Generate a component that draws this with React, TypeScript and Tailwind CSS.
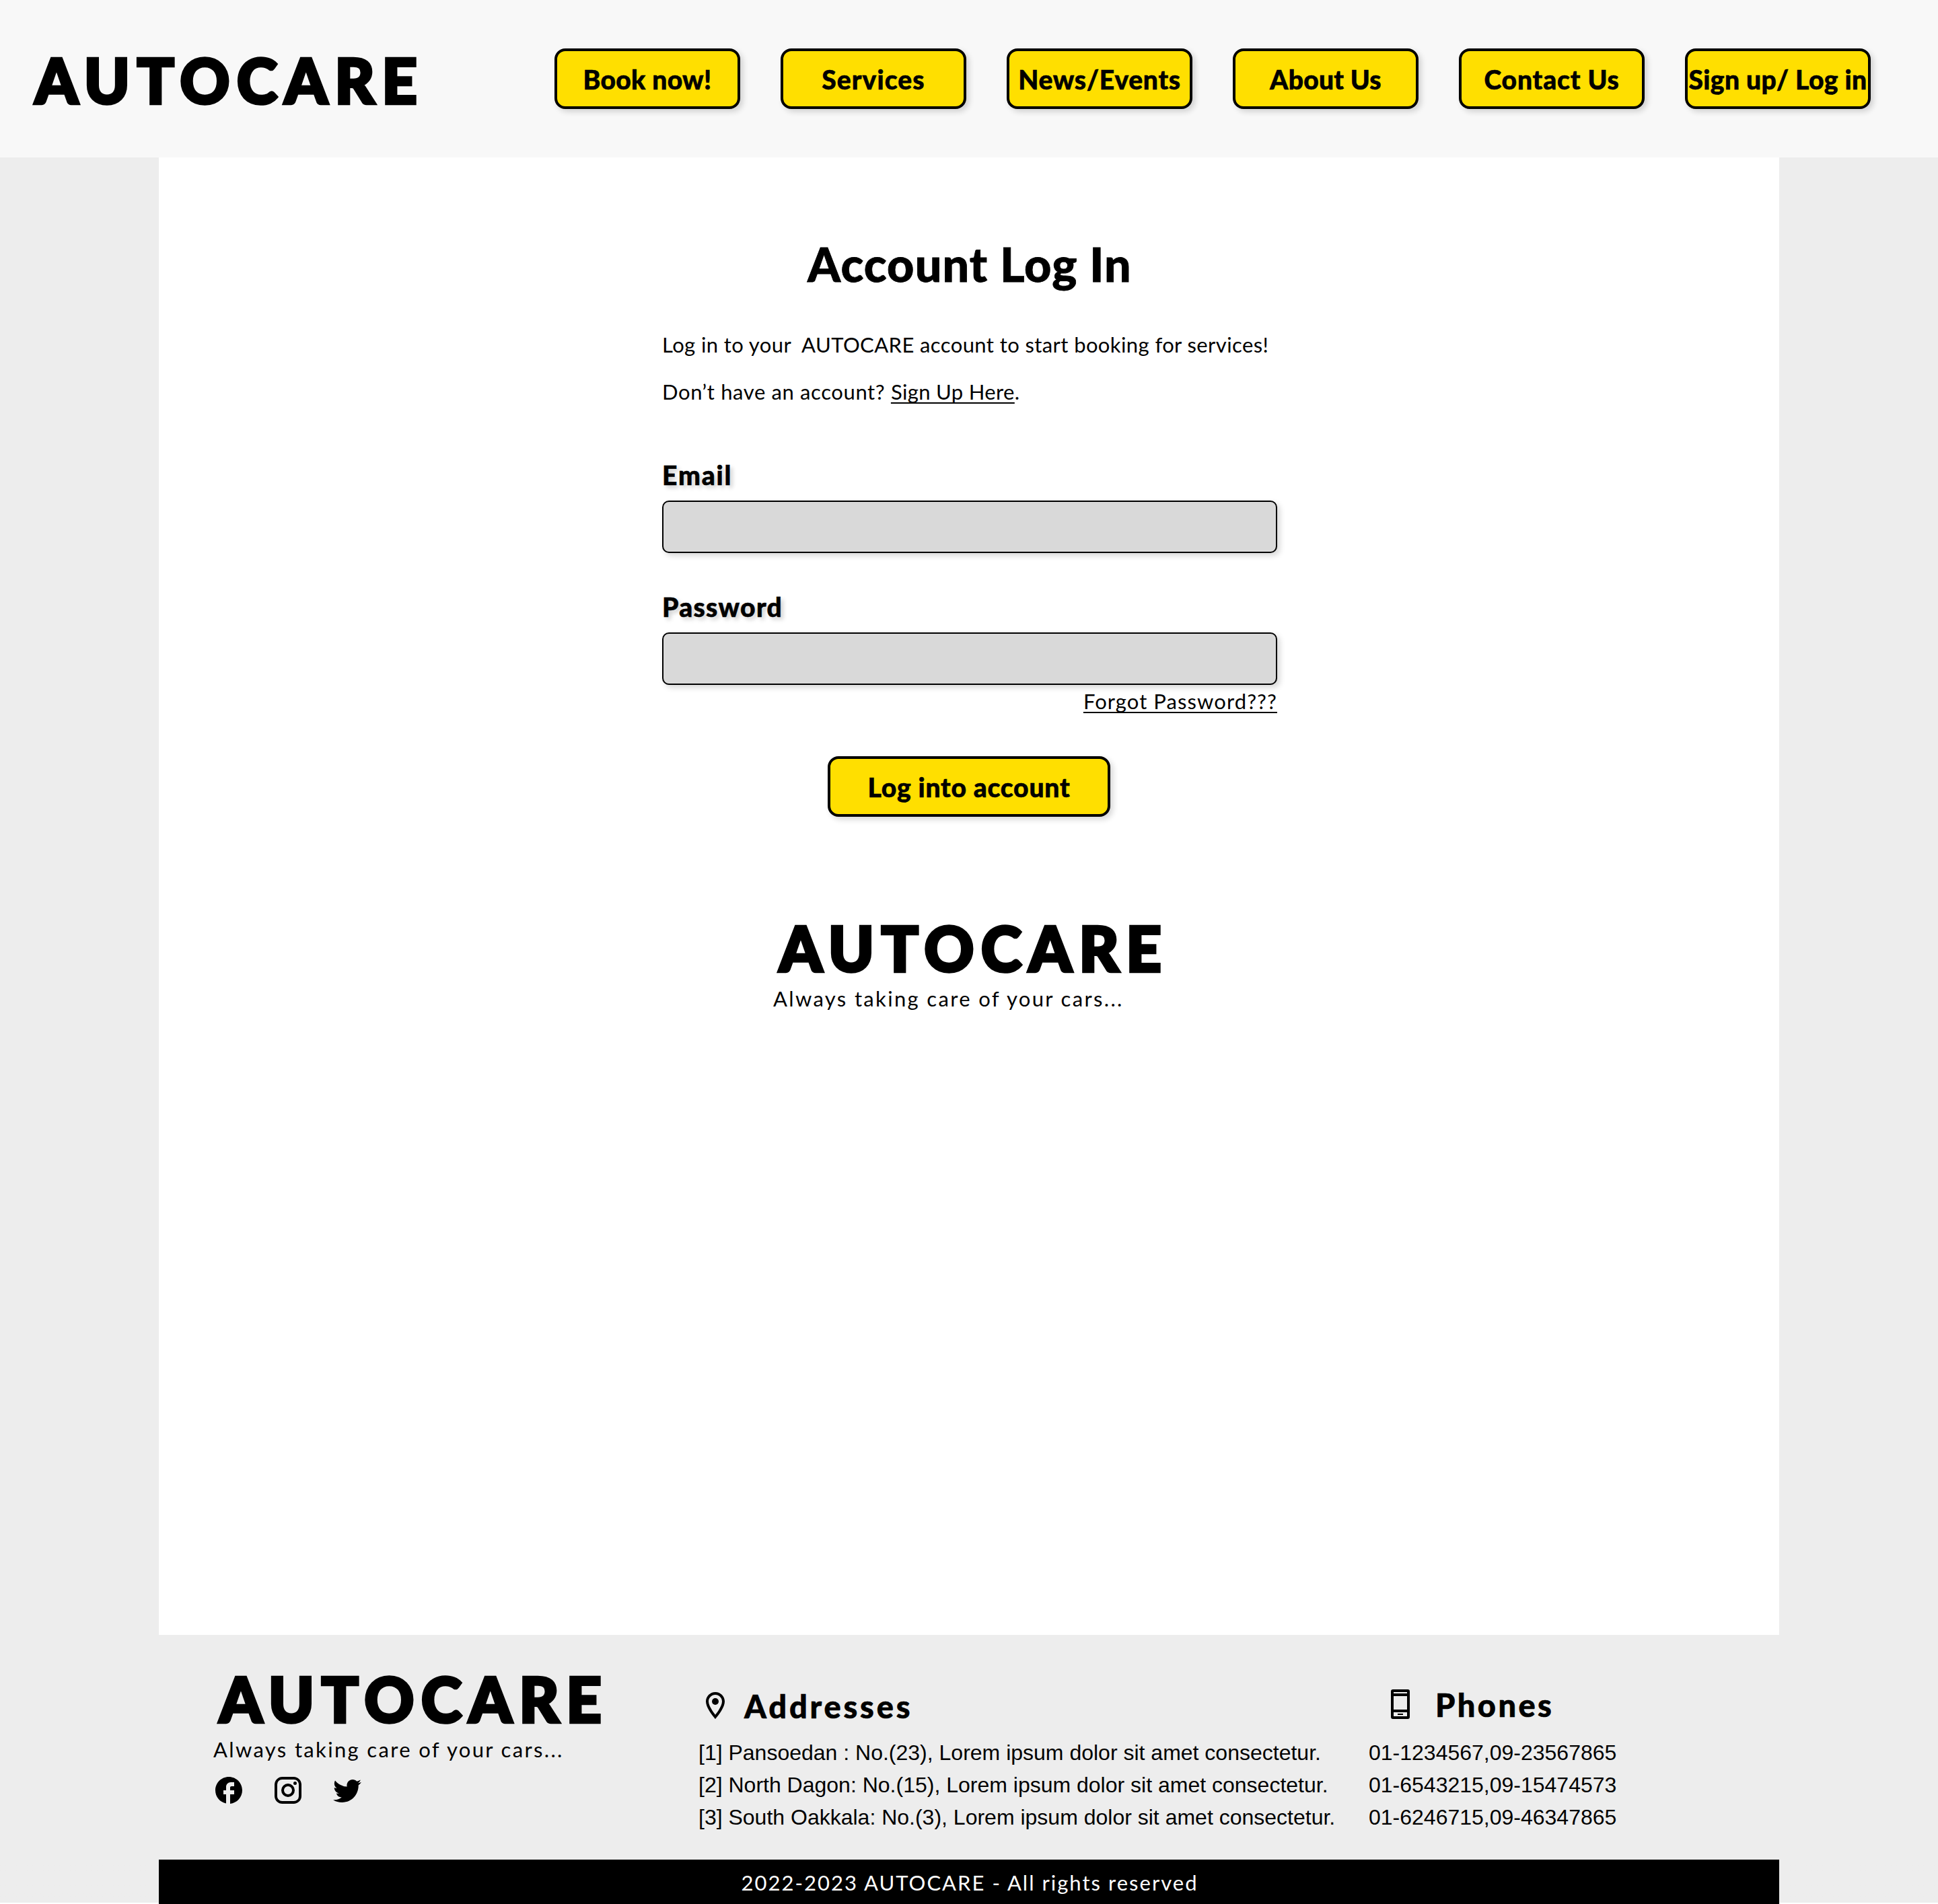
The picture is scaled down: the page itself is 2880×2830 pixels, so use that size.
import React from "react";

const navItems = [
  { label: "Book now!", spacing: "tracking-[0.3px]" },
  { label: "Services", spacing: "tracking-[1.1px]" },
  { label: "News/Events", spacing: "tracking-[0.72px]" },
  { label: "About Us", spacing: "tracking-[0.25px]" },
  { label: "Contact Us", spacing: "tracking-[0.85px]" },
  { label: "Sign up/ Log in", spacing: "tracking-[0.38px]" },
];

const addresses = [
  "[1] Pansoedan : No.(23), Lorem ipsum dolor sit amet consectetur.",
  "[2] North Dagon: No.(15), Lorem ipsum dolor sit amet consectetur.",
  "[3] South Oakkala: No.(3), Lorem ipsum dolor sit amet consectetur.",
];

const phones = [
  "01-1234567,09-23567865",
  "01-6543215,09-15474573",
  "01-6246715,09-46347865",
];

function Wordmark({ className = "" }: { className?: string }) {
  return (
    <div
      className={`text-[91px] leading-[100px] font-black tracking-[10.8px] whitespace-nowrap [-webkit-text-stroke:4.5px_black] ${className}`}
    >
      AUTOCARE
    </div>
  );
}

function Tagline({ className = "" }: { className?: string }) {
  return (
    <p className={`text-[31px] leading-[40px] tracking-[2.34px] whitespace-nowrap ${className}`}>
      Always taking care of your cars...
    </p>
  );
}

function Icon({ children, className = "" }: { children: React.ReactNode; className?: string }) {
  return (
    <svg viewBox="0 0 24 24" fill="currentColor" className={`size-12 shrink-0 ${className}`}>
      {children}
    </svg>
  );
}

function Header() {
  return (
    <header className="flex h-[234px] items-center justify-between bg-[#f8f8f8] pr-[100px] pl-[52px]">
      <Wordmark className="mt-1" />
      <nav className="flex gap-[60px]">
        {navItems.map((item) => (
          <button
            key={item.label}
            className={`flex h-[90px] w-[276px] items-center justify-center rounded-2xl border-4 border-black bg-[#ffdf00] pt-0.5 text-[39px] leading-[48px] font-black whitespace-nowrap shadow-[4px_4px_8px_rgba(0,0,0,0.16)] [-webkit-text-stroke:0.6px_black] ${item.spacing}`}
          >
            {item.label}
          </button>
        ))}
      </nav>
    </header>
  );
}

function Field({ label, type, spacing }: { label: string; type: string; spacing: string }) {
  return (
    <label className="block">
      <span
        className={`block pt-px text-[39px] leading-[48px] font-black [-webkit-text-stroke:0.6px_black] [text-shadow:4px_4px_6px_rgba(0,0,0,0.2)] ${spacing}`}
      >
        {label}
      </span>
      <input
        type={type}
        className="mt-[14px] block h-[78px] w-full rounded-[10px] border-2 border-black bg-[#d9d9d9] px-4 text-3xl shadow-[4px_4px_8px_rgba(0,0,0,0.16)] outline-none"
      />
    </label>
  );
}

function LoginForm() {
  return (
    <main className="mx-auto flex h-[2196px] w-[2408px] flex-col items-center bg-white pt-[116px]">
      <h1 className="ml-0.5 text-[70px] leading-[84px] font-black tracking-[1.1px] [-webkit-text-stroke:0.8px_black]">
        Account Log In
      </h1>
      <div className="ml-0.5 w-[914px]">
        <p className="mt-[58px] text-[31px] leading-[40px] tracking-[0.4px] whitespace-nowrap">
          Log in to your {"\u00a0"}AUTOCARE account to start booking for services!
        </p>
        <p className="mt-[30px] text-[31px] leading-[40px] whitespace-nowrap">
          <span className="tracking-[0.62px]">Don’t have an account? </span>
          <a className="tracking-[0.35px] underline decoration-2 underline-offset-4 [text-decoration-skip-ink:none]">
            Sign Up Here
          </a>
          .
        </p>
        <div className="mt-[79px] flex flex-col gap-[55px]">
          <Field label="Email" type="email" spacing="tracking-[1.9px]" />
          <Field label="Password" type="password" spacing="tracking-[1.3px]" />
        </div>
        <div className="mt-1 flex justify-end text-[31px] leading-[40px] tracking-[1.08px]">
          <a className="underline decoration-2 underline-offset-4 [text-decoration-skip-ink:none]">
            Forgot Password???
          </a>
        </div>
      </div>
      <button className="mt-[62px] flex h-[90px] w-[420px] items-center justify-center rounded-2xl border-4 border-black bg-[#ffdf00] pt-0.5 text-[39px] leading-[48px] font-black tracking-[0.78px] shadow-[4px_4px_8px_rgba(0,0,0,0.16)] [-webkit-text-stroke:0.6px_black]">
        Log into account
      </button>
      <div className="mt-[145px] w-[582px]">
        <Wordmark className="pl-[9px]" />
        <Tagline className="mt-[5px]" />
      </div>
    </main>
  );
}

function Footer() {
  return (
    <footer className="mx-auto w-[2408px]">
      <div className="flex h-[334px]">
        <div className="w-[802px] pt-[45px] pl-20">
          <Wordmark className="pl-[10px]" />
          <Tagline className="mt-[5px] pl-px" />
          <div className="mt-[17px] flex gap-10">
            <Icon>
              <path d="M22 12c0-5.52-4.48-10-10-10S2 6.48 2 12c0 4.84 3.44 8.87 8 9.8V15H8v-3h2V9.5C10 7.57 11.57 6 13.5 6H16v3h-2c-.55 0-1 .45-1 1v2h3v3h-3v6.95c5.05-.5 9-4.76 9-9.95z" />
            </Icon>
            <Icon>
              <path d="M7.8 2h8.4C19.4 2 22 4.6 22 7.8v8.4a5.8 5.8 0 0 1-5.8 5.8H7.8C4.6 22 2 19.4 2 16.2V7.8A5.8 5.8 0 0 1 7.8 2m-.2 2A3.6 3.6 0 0 0 4 7.6v8.8C4 18.39 5.61 20 7.6 20h8.8a3.6 3.6 0 0 0 3.6-3.6V7.6C20 5.61 18.39 4 16.4 4H7.6m9.65 1.5a1.25 1.25 0 0 1 1.25 1.25A1.25 1.25 0 0 1 17.25 8 1.25 1.25 0 0 1 16 6.75a1.25 1.25 0 0 1 1.25-1.25M12 7a5 5 0 0 1 5 5 5 5 0 0 1-5 5 5 5 0 0 1-5-5 5 5 0 0 1 5-5m0 2a3 3 0 0 0-3 3 3 3 0 0 0 3 3 3 3 0 0 0 3-3 3 3 0 0 0-3-3z" />
            </Icon>
            <Icon>
              <path d="M22.46 6c-.77.35-1.6.58-2.46.69.88-.53 1.56-1.37 1.88-2.38-.83.5-1.75.85-2.72 1.05C18.37 4.5 17.26 4 16 4c-2.35 0-4.27 1.92-4.27 4.29 0 .34.04.67.11.98C8.28 9.09 5.11 7.38 3 4.79c-.37.63-.58 1.37-.58 2.15 0 1.49.75 2.81 1.91 3.56-.71 0-1.37-.2-1.95-.5v.03c0 2.08 1.48 3.82 3.44 4.21a4.22 4.22 0 0 1-1.93.07 4.28 4.28 0 0 0 4 2.98 8.521 8.521 0 0 1-5.33 1.84c-.34 0-.68-.02-1.02-.06C3.44 20.29 5.7 21 8.12 21 16 21 20.33 14.46 20.33 8.79c0-.19 0-.37-.01-.56.84-.6 1.56-1.36 2.14-2.23z" />
            </Icon>
          </div>
        </div>

        <div className="w-[996px] pt-[77px]">
          <div className="flex items-start gap-[19px] pl-px">
            <Icon className="mt-1">
              <path d="M12 2C8.13 2 5 5.13 5 9c0 5.25 7 13 7 13s7-7.75 7-13c0-3.87-3.13-7-7-7zM7 9c0-2.76 2.24-5 5-5s5 2.24 5 5c0 2.88-2.88 7.19-5 9.88C9.92 16.21 7 11.85 7 9z" />
              <circle cx="12" cy="9" r="2.5" />
            </Icon>
            <h2 className="pt-px text-[47px] leading-[56px] font-black tracking-[3.8px] [-webkit-text-stroke:0.6px_black]">
              Addresses
            </h2>
          </div>
          <ul className="mt-[17px] font-['Liberation_Sans',sans-serif] text-[32px] leading-[48px] whitespace-nowrap">
            {addresses.map((line) => (
              <li key={line}>{line}</li>
            ))}
          </ul>
        </div>

        <div className="pt-[75px]">
          <div className="flex items-start gap-7 pl-[23px]">
            <Icon className="mt-1">
              <path
                fillRule="evenodd"
                d="M6.5 1h11A1.5 1.5 0 0 1 19 2.5v19a1.5 1.5 0 0 1-1.5 1.5h-11A1.5 1.5 0 0 1 5 21.5v-19A1.5 1.5 0 0 1 6.5 1zM7 3v1h10V3zM7 6v10h10V6zM7 18v3h10v-3z"
              />
              <path d="M10 19h4v1h-4z" />
            </Icon>
            <h2 className="pt-px text-[47px] leading-[56px] font-black tracking-[3.4px] [-webkit-text-stroke:0.6px_black]">
              Phones
            </h2>
          </div>
          <ul className="mt-[19px] font-['Liberation_Sans',sans-serif] text-[32px] leading-[48px] whitespace-nowrap">
            {phones.map((line) => (
              <li key={line}>{line}</li>
            ))}
          </ul>
        </div>
      </div>
    </footer>
  );
}

export default function App() {
  return (
    <div className="w-[2880px] bg-[#ededed] font-['Lato',sans-serif] text-black">
      <Header />
      <LoginForm />
      <Footer />
      <div className="bg-linear-to-b from-[#ededed] from-[64px] to-white to-[64px]">
        <div className="mx-auto flex h-[66px] w-[2408px] items-center justify-center bg-black pt-0.5 pl-0.5 text-[31px] leading-[40px] tracking-[2.02px] text-white">
          2022-2023 AUTOCARE - All rights reserved
        </div>
      </div>
    </div>
  );
}
